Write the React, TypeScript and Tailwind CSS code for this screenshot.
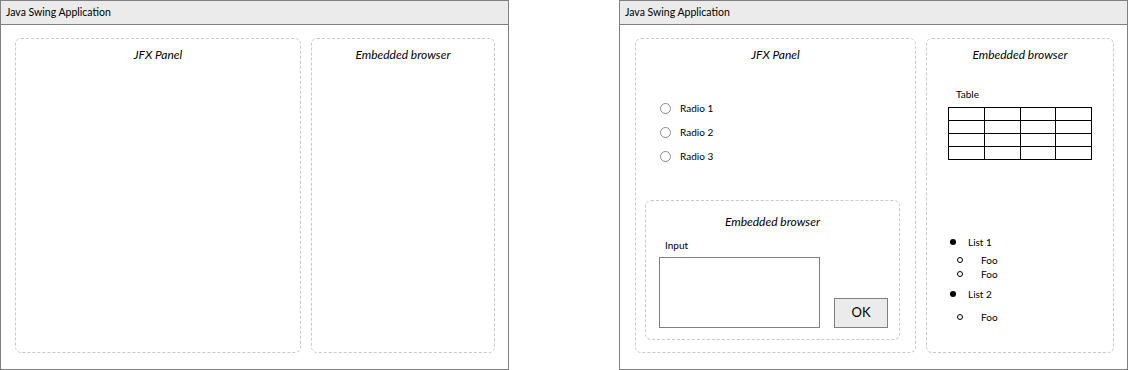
import React from "react";

const Panel = ({ title, className, children }: { title: string; className: string; children?: React.ReactNode }) => (
  <div className={`flex flex-col rounded-md border border-dashed border-[#c8c8c8] ${className}`}>
    <div className="pt-[8px] text-center text-[12px] leading-[16px] italic text-black">{title}</div>
    {children}
  </div>
);

const Window = ({ children }: { children: React.ReactNode }) => (
  <div className="flex h-[370px] w-[509px] flex-col border border-[#808080] bg-white">
    <div className="flex h-[24px] shrink-0 items-center border-b border-[#808080] bg-[#ebebeb] pl-[5px] text-[10.5px] text-black">
      Java Swing Application
    </div>
    {children}
  </div>
);

const Radio = ({ label }: { label: string }) => (
  <div className="flex h-[24px] items-center">
    <span className="size-[11px] rounded-full border border-[#8a8a8a] bg-white" />
    <span className="ml-[9px] text-[10px]">{label}</span>
  </div>
);

const ListItem = ({ label, sub }: { label: string; sub?: boolean }) =>
  sub ? (
    <div className="flex h-[14px] items-center pl-[8px]">
      <span className="size-[6px] rounded-full border-[1.5px] border-black" />
      <span className="ml-[18px] text-[10px]">{label}</span>
    </div>
  ) : (
    <div className="flex h-[14px] items-center pl-[1px]">
      <span className="size-[6px] rounded-full bg-black" />
      <span className="ml-[12px] text-[10px]">{label}</span>
    </div>
  );

export default function App() {
  return (
    <div className="flex w-[1129px] gap-[110px] bg-white font-['Lato',sans-serif] text-black">
      <Window>
        <div className="flex flex-1 gap-[10px] pt-[13px] pb-[16px] pl-[14px]">
          <Panel title="JFX Panel" className="w-[286px]" />
          <Panel title="Embedded browser" className="w-[184px]" />
        </div>
      </Window>

      <Window>
        <div className="flex flex-1 gap-[10px] pt-[13px] pb-[16px] pl-[15px]">
          <Panel title="JFX Panel" className="w-[281px]">
            <div className="mt-[33px] pl-[24px]">
              <Radio label="Radio 1" />
              <Radio label="Radio 2" />
              <Radio label="Radio 3" />
            </div>
            <div className="mt-[32px] ml-[9px] flex h-[140px] w-[255px] flex-col rounded-md border border-dashed border-[#c8c8c8]">
              <div className="pt-[13px] text-center text-[12px] leading-[16px] italic">Embedded browser</div>
              <div className="mt-[8px] pl-[19px] text-[10px] leading-[14px]">Input</div>
              <div className="mt-[5px] flex items-end gap-[14px] pl-[13px]">
                <div className="h-[71px] w-[161px] border border-[#808080] bg-white" />
                <div className="flex h-[30px] w-[54px] items-center justify-center border border-[#808080] bg-[#ebebeb] text-[13px]">
                  OK
                </div>
              </div>
            </div>
          </Panel>

          <Panel title="Embedded browser" className="w-[188px]">
            <div className="mt-[24px] pl-[29px] text-[10px] leading-[14px]">Table</div>
            <table className="mt-[6px] ml-[21px] w-[144px] border-collapse">
              <tbody>
                {[0, 1, 2, 3].map((r) => (
                  <tr key={r} className="h-[13px]">
                    {[0, 1, 2, 3].map((c) => (
                      <td key={c} className="w-[36px] border border-black p-0" />
                    ))}
                  </tr>
                ))}
              </tbody>
            </table>
            <div className="mt-[75px] pl-[22px]">
              <ListItem label="List 1" />
              <div className="mt-[4px]" />
              <ListItem label="Foo" sub />
              <ListItem label="Foo" sub />
              <div className="mt-[6px]" />
              <ListItem label="List 2" />
              <div className="mt-[9px]" />
              <ListItem label="Foo" sub />
            </div>
          </Panel>
        </div>
      </Window>
    </div>
  );
}
